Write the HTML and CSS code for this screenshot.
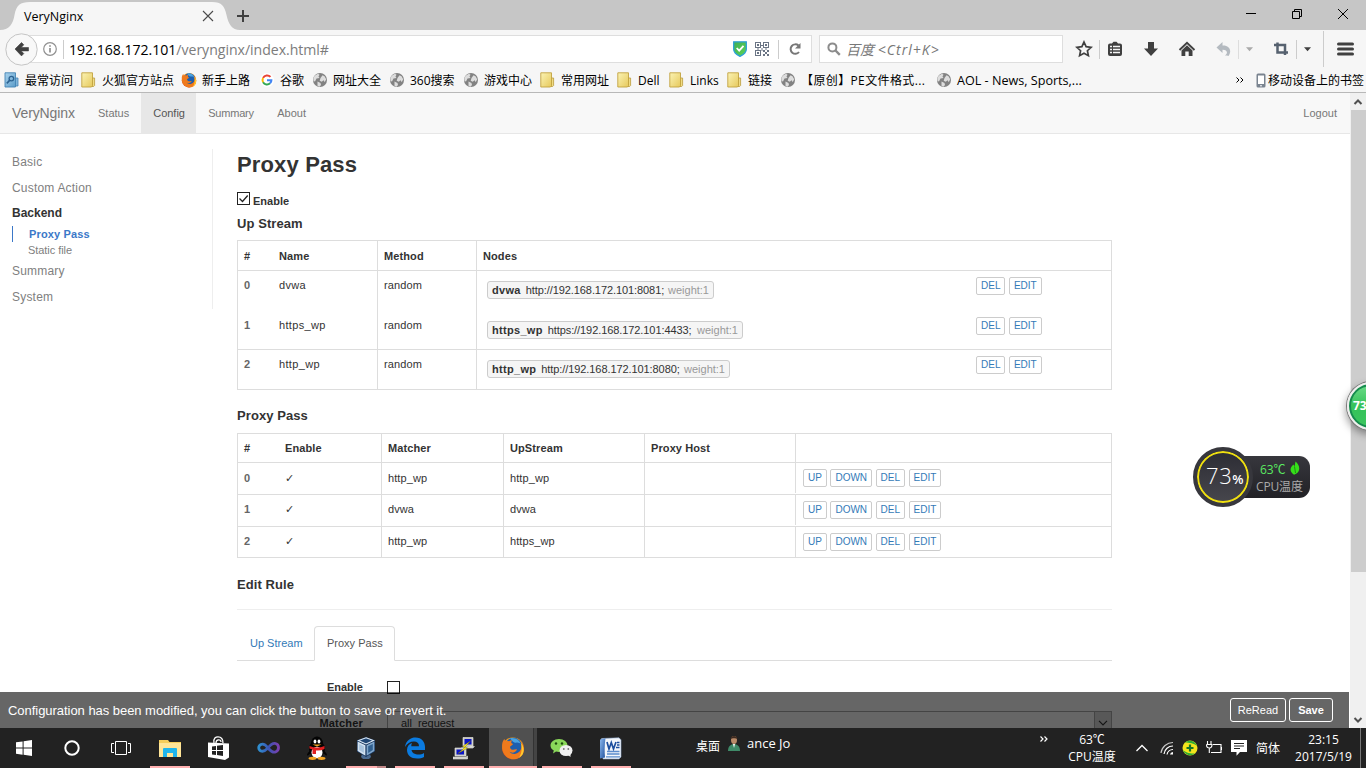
FILE: index.html
```html
<!DOCTYPE html>
<html lang="zh-CN">
<head>
<meta charset="utf-8">
<title>VeryNginx</title>
<link rel="stylesheet" href="styles.css">
</head>
<body>
<svg class="defs" width="0" height="0">
  <defs>
    <linearGradient id="gFold" x1="0" y1="0" x2="1" y2="1"><stop offset="0" stop-color="#fbf3b4"/><stop offset="1" stop-color="#e6c95c"/></linearGradient>
    <linearGradient id="gBlue" x1="0" y1="0" x2="1" y2="1"><stop offset="0" stop-color="#a9d3ee"/><stop offset="1" stop-color="#5b9cc9"/></linearGradient>
    <linearGradient id="gFox" x1="0" y1="0" x2="0" y2="1"><stop offset="0" stop-color="#f7a21b"/><stop offset="1" stop-color="#d93a1a"/></linearGradient>
    <linearGradient id="gVs" x1="0" y1="0" x2="1" y2="0"><stop offset="0" stop-color="#2f8fd0"/><stop offset=".5" stop-color="#3a55b4"/><stop offset="1" stop-color="#7a3fb0"/></linearGradient>
    <linearGradient id="gWord" x1="0" y1="0" x2="1" y2="1"><stop offset="0" stop-color="#8bb8ee"/><stop offset="1" stop-color="#1f4f9c"/></linearGradient>
    <linearGradient id="gShield" x1="0" y1="0" x2="1" y2="1"><stop offset="0" stop-color="#3fae55"/><stop offset="1" stop-color="#5ed455"/></linearGradient>
  </defs>
  <symbol id="folder" viewBox="0 0 16 16"><path d="M11 6h2.600v7.500l-1 1h-1.600z" fill="#f0dc84" stroke="#b99a3c" stroke-width=".8"/><path d="M.8.800h10.700v12.700L10.500 15H.8z" fill="url(#gFold)" stroke="#c2a33f" stroke-width=".9"/></symbol>
  <symbol id="often" viewBox="0 0 16 16"><path d="M11 6h3v8h-3z" fill="#7fb4da" stroke="#4484b4" stroke-width=".8"/><path d="M1 .8h10.5V15H1z" fill="url(#gBlue)" stroke="#4484b4" stroke-width=".9"/><circle cx="7.4" cy="6.6" r="2.3" fill="none" stroke="#2c6291" stroke-width="1.3"/><path d="M5.6 8.4 2.8 11.4" stroke="#2c6291" stroke-width="1.6"/></symbol>
  <symbol id="firefox" viewBox="0 0 24 24"><circle cx="12" cy="12.300" r="10.900" fill="url(#gFox)"/><circle cx="12.500" cy="10" r="8.300" fill="#1d5fae"/><path d="M9 2.200c5-1 9 1 11 6-1-1-3-2-5-1.500C13 7 11 5 9 2.200z" fill="#4aa3e0"/><path d="M1.200 8C1.500 5.500 2.500 4 3.500 3l.8 2.500C5.500 4.800 7 4.800 8 5.200L10.800 4l-.6 3c1 .4 1.800.8 1.600 1.600-.4 1-2 1.200-2.600 2-.3 1 .2 2.800 2.300 3.200 1.800.3 3-.9 4.500-.3-1 3-5 4-7.500 2.300 3 3.500 9 2.500 11-1.300 1.300-2.500 1.300-5 .5-7.500 2.500 3 3.500 6.500 2.300 10C20.500 21.500 16 23.500 12 23.300 5 23 .5 16 1.200 8z" fill="#ef7a1c"/><path d="M20 7c2.500 3 3.500 6.500 2 10.500-1 2-2.500 3.500-4 4.300 2.500-4 3.500-9 2-14.800z" fill="#ffcb2e"/></symbol>
  <symbol id="google" viewBox="0 0 16 16"><circle cx="8" cy="8" r="8" fill="#fff"/><g fill="none" stroke-width="2.300"><path d="M12 4.500A5.200 5.200 0 0 0 3.500 5.600" stroke="#ea4335"/><path d="M3.500 5.600a5.200 5.200 0 0 0 0 5" stroke="#fbbc05"/><path d="M3.500 10.500a5.200 5.200 0 0 0 8 1.300" stroke="#34a853"/><path d="M11.500 11.800A5 5 0 0 0 13 8.200H8" stroke="#4285f4"/></g></symbol>
  <symbol id="globe" viewBox="0 0 16 16"><circle cx="8" cy="8" r="7" fill="#828282"/><path d="M3 3.500l3-1.700 1.500 1-1 1.700 1 1.500-3 .5-1.500 3-1.500-.5C1 6.500 1.800 4.800 3 3.500zM8.500 6l2-2.800 2 1 1.700 3-1.500 3-1-2-2 1.500-2-1zM5.500 9.500l3 1.500.5 2-1.500 1.800-2-1z" fill="#ddd"/></symbol>
  <symbol id="tri" viewBox="0 0 8 5"><path d="M0 0h8L4 4.500z"/></symbol>
</svg>

<header class="titlebar">
  <div class="tab">
    <svg class="tab-shape" width="240" height="28" viewBox="0 0 240 28"><path d="M0 28C9 28 13 22 14.500 13 16.500 3 20 0 30 0H212C222 0 224.500 4 226.500 13 228.500 22 232 28 240 28z" fill="#f6f6f6"/></svg>
    <span class="tab-title">VeryNginx</span>
    <svg class="tab-close" width="12" height="12" viewBox="0 0 12 12"><path d="M1 1l10 10M11 1L1 11" stroke="#4a4a4a" stroke-width="1.100"/></svg>
  </div>
  <svg class="tab-new" width="14" height="14" viewBox="0 0 14 14"><path d="M7 1v12M1 7h12" stroke="#404040" stroke-width="2"/></svg>
  <div class="win-buttons">
    <svg width="12" height="12" viewBox="0 0 12 12"><path d="M1 5.500h10" stroke="#000"/></svg>
    <svg width="12" height="12" viewBox="0 0 12 12" fill="none" stroke="#000"><path d="M1.500 3.500h7v7h-7zM3.500 3.500v-2h7v7h-2"/></svg>
    <svg width="12" height="12" viewBox="0 0 12 12"><path d="M1 1l10 10M11 1L1 11" stroke="#000"/></svg>
  </div>
</header>

<div class="toolbar">
  <div class="urlbar">
    <svg class="back" width="33" height="33" viewBox="0 0 33 33"><circle cx="16.500" cy="16.500" r="15.700" fill="#f8f8f8" stroke="#c4c4c4"/><path d="M10 16l6.500-6.500 2.300 2.300-2.600 2.700H23.500v3.400h-7.300l2.600 2.700-2.300 2.300z" fill="#404040" stroke="#404040" stroke-width=".6"/></svg>
    <svg class="info" width="14" height="14" viewBox="0 0 14 14"><circle cx="7" cy="7" r="6.300" fill="none" stroke="#909090" stroke-width="1.200"/><path d="M7 6v4.500M7 3.200v1.600" stroke="#808080" stroke-width="1.500"/></svg>
    <i class="sep"></i>
    <span class="url"><b>192.168.172.101</b>/verynginx/index.html#</span>
    <svg class="shield" width="14" height="16" viewBox="0 0 14 16"><path d="M.7.800h12.600v7.500c0 3-3 5.500-6.300 7C3.700 13.800.7 11.300.7 8.300z" fill="url(#gShield)" stroke="#2b9fd8" stroke-width="1.300"/><path d="M3.700 7l2.500 2.700 4.300-4.900" fill="none" stroke="#fff" stroke-width="1.800"/></svg>
    <svg class="qr" width="14" height="14" viewBox="0 0 14 14" fill="#6a7484"><path fill-rule="evenodd" d="M0 0h6v6H0zM1 1v4h4V1zM8 0h6v6H8zM9 1v4h4V1zM0 8h6v6H0zM1 9v4h4V9z"/><path d="M2 2h2v2H2zM10 2h2v2h-2zM2 10h2v2H2zM8 8h2v2H8zM12 8h2v2h-2zM10 10h2v2h-2zM8 12h2v2H8zM12 12h2v2h-2zM6 3h2v1H6zM6.500 6h1v3h-1zM2 6.500h2v1H2zM10 6.500h2v1h-2z"/></svg>
    <i class="sep sep-reload"></i>
    <svg class="reload" width="14" height="14" viewBox="0 0 14 14"><path d="M10.500 3.600A4.700 4.700 0 1 0 11 10" fill="none" stroke="#777" stroke-width="2"/><path d="M12.500 1v5.500H7z" fill="#777"/></svg>
  </div>
  <div class="search">
    <svg width="14" height="14" viewBox="0 0 14 14"><circle cx="5.400" cy="5.400" r="4" fill="none" stroke="#8c8c8c" stroke-width="2"/><path d="M8.500 8.500l4.300 4.300" stroke="#8c8c8c" stroke-width="2.400"/></svg>
    <span>百度 <span class="keys">&lt;Ctrl+K&gt;</span></span>
  </div>
  <div class="tools">
    <svg width="18" height="18" viewBox="0 0 18 18"><path d="M9 2l2.100 4.700 5.100.6-3.800 3.400 1 5L9 13.200l-4.400 2.500 1-5L1.800 7.300l5.100-.6z" fill="none" stroke="#404040" stroke-width="1.700"/></svg>
    <i class="sep"></i>
    <svg width="16" height="16" viewBox="0 0 16 16"><path d="M4.500 3L6.500.800h3L11.500 3zM3 2.500h10a2 2 0 0 1 2 2V13a2 2 0 0 1-2 2H3a2 2 0 0 1-2-2V4.500a2 2 0 0 1 2-2z" fill="#404040"/><path d="M3 5.500h2M6 5.500h7M3 8.500h2M6 8.500h7M3 11.500h2M6 11.500h7" stroke="#f6f6f6" stroke-width="1.300"/></svg>
    <svg width="16" height="16" viewBox="0 0 16 16"><path d="M5 1h6v6.500h4L8 15 1 7.500h4z" fill="#404040"/></svg>
    <svg width="18" height="16" viewBox="0 0 18 16"><path d="M1.500 9L9 1.800 16.500 9" fill="none" stroke="#404040" stroke-width="1.900"/><path d="M3.500 9.500L9 4.300l5.500 5.200V15H10.700v-4.500H7.300V15H3.500z" fill="#404040"/></svg>
    <svg class="end" width="16" height="16" viewBox="0 0 16 16"><path d="M.5 6.500L6.500 1v3.500c6.500-.5 10 5 6 10.500-1-.5-2-.5-3.500-.5 3.500-2.500 2-6-2.500-5.800V12z" fill="#b4bac0"/></svg>
    <i class="sep pale"></i>
    <svg class="grey" width="7" height="5"><use href="#tri"/></svg>
    <svg class="end" width="16" height="16" viewBox="0 0 16 16"><path d="M1 4h11v10M4.500 1.500v10H15" fill="none" stroke="#56616f" stroke-width="2.500"/></svg>
    <i class="sep"></i>
    <svg class="dark" width="7" height="5"><use href="#tri"/></svg>
    <i class="sep tall"></i>
    <svg width="17" height="14" viewBox="0 0 17 14"><path d="M1.500 2h14M1.500 7h14M1.500 12h14" stroke="#404040" stroke-width="3" stroke-linecap="round"/></svg>
  </div>
</div>

<nav class="bookmarks">
  <a><svg width="16" height="16"><use href="#often"/></svg>最常访问</a>
  <a><svg width="16" height="16"><use href="#folder"/></svg>火狐官方站点</a>
  <a><svg width="16" height="16"><use href="#firefox"/></svg>新手上路</a>
  <a class="goog"><svg width="14" height="14"><use href="#google"/></svg>谷歌</a>
  <a><svg width="16" height="16"><use href="#globe"/></svg>网址大全</a>
  <a><svg width="16" height="16"><use href="#globe"/></svg>360搜索</a>
  <a><svg width="16" height="16"><use href="#globe"/></svg>游戏中心</a>
  <a><svg width="16" height="16"><use href="#folder"/></svg>常用网址</a>
  <a><svg width="16" height="16"><use href="#folder"/></svg>Dell</a>
  <a><svg width="16" height="16"><use href="#folder"/></svg>Links</a>
  <a><svg width="16" height="16"><use href="#folder"/></svg>链接</a>
  <a class="pe"><svg width="16" height="16"><use href="#globe"/></svg>【原创】PE文件格式...</a>
  <a class="aol"><svg width="16" height="16"><use href="#globe"/></svg>AOL - News, Sports,...</a>
  <span class="more"><svg width="8" height="6" viewBox="0 0 8 6"><path d="M.5.500L3 3 .5 5.500M4.500.500L7 3 4.500 5.500" fill="none" stroke="#000"/></svg></span>
  <a class="mobile"><svg width="10" height="15" viewBox="0 0 10 15"><rect x=".5" y=".5" width="9" height="14" rx="1.500" fill="#7a8490"/><path d="M2 2.500h6v8.500H2z" fill="#fff"/><path d="M4 12.800h2" stroke="#fff"/></svg>移动设备上的书签</a>
</nav>

<div class="viewport">
  <div class="page">
    <nav class="navbar">
      <a class="brand">VeryNginx</a><a>Status</a><a class="on">Config</a><a class="summ">Summary</a><a>About</a><a class="logout">Logout</a>
    </nav>
    <div class="body">
      <aside class="side">
        <a>Basic</a><a>Custom Action</a><a class="open">Backend</a>
        <div class="sub"><a class="cur">Proxy Pass</a><a>Static file</a></div>
        <a>Summary</a><a>System</a>
      </aside>
      <main class="main">
        <h1>Proxy Pass</h1>
        <label class="enable"><span class="box"><svg width="13" height="13" viewBox="0 0 13 13"><path d="M2.500 6.500l3 3 5.200-6" fill="none" stroke="#222" stroke-width="1.300"/></svg></span>Enable</label>
        <h2>Up Stream</h2>
        <div class="table up">
          <div class="row head"><b>#</b><b>Name</b><b class="l">Method</b><b class="l">Nodes</b><b></b></div>
          <div class="row merged"><i>0</i><span class="name">dvwa</span><span class="l">random</span><span class="l"><em class="w1"><b>dvwa</b><span>http://192.168.172.101:8081;</span><small>weight:1</small></em></span><span class="acts"><a>DEL</a><a>EDIT</a></span></div>
          <div class="row"><i>1</i><span class="name">https_wp</span><span class="l">random</span><span class="l"><em class="w2"><b>https_wp</b><span>https://192.168.172.101:4433;</span><small>weight:1</small></em></span><span class="acts"><a>DEL</a><a>EDIT</a></span></div>
          <div class="row last"><i>2</i><span class="name">http_wp</span><span class="l">random</span><span class="l"><em class="w3"><b>http_wp</b><span>http://192.168.172.101:8080;</span><small>weight:1</small></em></span><span class="acts"><a>DEL</a><a>EDIT</a></span></div>
        </div>
        <h2 class="h-pass">Proxy Pass</h2>
        <div class="table pass">
          <div class="row head"><b>#</b><b>Enable</b><b class="l">Matcher</b><b class="l">UpStream</b><b class="l">Proxy Host</b><b class="l"></b></div>
          <div class="row first"><i>0</i><span class="tick">✓</span><span class="l">http_wp</span><span class="l">http_wp</span><span class="l"></span><span class="l acts"><a>UP</a><a>DOWN</a><a>DEL</a><a>EDIT</a></span></div>
          <div class="row"><i>1</i><span class="tick">✓</span><span class="l">dvwa</span><span class="l">dvwa</span><span class="l"></span><span class="l acts"><a>UP</a><a>DOWN</a><a>DEL</a><a>EDIT</a></span></div>
          <div class="row last"><i>2</i><span class="tick">✓</span><span class="l">http_wp</span><span class="l">https_wp</span><span class="l"></span><span class="l acts"><a>UP</a><a>DOWN</a><a>DEL</a><a>EDIT</a></span></div>
        </div>
        <h2 class="h-edit">Edit Rule</h2>
        <div class="tabs"><a>Up Stream</a><a class="on">Proxy Pass</a></div>
        <div class="field"><b>Enable</b><span class="box"></span></div>
        <div class="field f-match"><b>Matcher</b><span class="select">all_request<i><svg width="10" height="6" viewBox="0 0 10 6"><path d="M1 .8l4 4 4-4" fill="none" stroke="#333" stroke-width="1.200"/></svg></i></span></div>
      </main>
    </div>
    <div class="notice"><span>Configuration has been modified, you can click the button to save or revert it.</span><button>ReRead</button><button class="save">Save</button></div>
  </div>
  <div class="scroll">
    <svg width="10" height="6" viewBox="0 0 10 6"><path d="M1.500 5L5 1.500 8.500 5" fill="none" stroke="#505050" stroke-width="2"/></svg>
    <div class="thumb"></div>
    <svg width="10" height="6" viewBox="0 0 10 6"><path d="M1.500 1L5 4.500 8.500 1" fill="none" stroke="#505050" stroke-width="2"/></svg>
  </div>
</div>

<div class="ball">73</div>
<div class="gadget">
  <div class="gadget-info"><span class="temp">63℃ <svg width="10" height="14" viewBox="0 0 10 14"><path d="M5.500.500C9.500 4 11 9 6.500 12.500L4 13.800C-.5 11 -.5 6.500 3.500 3.500l1 2z" fill="#35e01a"/><path d="M4.500 5.500L5.500 12" stroke="#1b7a10" stroke-width=".8"/></svg></span><span>CPU温度</span></div>
  <div class="dial"><span>73</span><small>%</small></div>
</div>

<footer class="taskbar">
  <div class="apps">
    <div><svg width="16" height="16" viewBox="0 0 16 16"><path d="M0 2.300L6.600 1.400V7.600H0zM7.600 1.200L16 0v7.600H7.600zM0 8.500h6.600v6.200L0 13.800zM7.600 8.500H16V16l-8.400-1.200z" fill="#fff"/></svg></div>
    <div><svg width="18" height="18" viewBox="0 0 18 18"><circle cx="9" cy="9" r="6.700" fill="none" stroke="#fff" stroke-width="2"/></svg></div>
    <div><svg width="20" height="14" viewBox="0 0 20 14"><path d="M4.500.500h11v13h-11zM3 2.500H.500v9H3M17 2.500h2.500v9H17" fill="none" stroke="#fff"/></svg></div>
    <div class="run"><svg width="22" height="19" viewBox="0 0 22 19"><path d="M0 1h9l1.500 2H22v15H0z" fill="#f5cd5b"/><path d="M0 4h22v14H0z" fill="#ffe597"/><path d="M4 18v-8q0-1 1-1h12q1 0 1 1v8h-4v-4H8v4z" fill="#1fb5ec"/></svg></div>
    <div><svg width="22" height="24" viewBox="0 0 22 24"><path d="M6 7C5 2 8 .8 10 .8s5 1.200 5 6.200M8 7C8 3 13 3 13 6" fill="none" stroke="#fff" stroke-width="1.300"/><path d="M0 6.500L21 7.500v14L17 24 0 21z" fill="#fff"/><path d="M4 10.500l4-.6v4H4zM9 9.800l6-.7v4.800H9zM4 15h4v4l-4-.6zM9 15h6v4.900l-6-.8z" fill="#222"/></svg></div>
    <div><svg width="24" height="14" viewBox="0 0 24 14"><path d="M12 7C9 3 7 2.500 5 3.500 2 5 2 8.500 5 10c3 1.200 5-1 7-3 3-4 5-5 7.500-4.500 4 1 4 7 0 8.500-3 1-5-1-7.500-4z" fill="none" stroke="url(#gVs)" stroke-width="2.800"/></svg></div>
    <div><svg width="22" height="24" viewBox="0 0 22 24"><path d="M4 15C0 18 1 20 2 19.500L5 17M18 15c4 3 3 5 2 4.500L17 17" fill="#050505"/><ellipse cx="11" cy="13" rx="8" ry="9" fill="#050505"/><ellipse cx="11" cy="7.500" rx="6" ry="7" fill="#050505"/><ellipse cx="11" cy="16.500" rx="5.500" ry="5.800" fill="#fff"/><ellipse cx="9" cy="5.500" rx="1.400" ry="1.900" fill="#fff"/><ellipse cx="13" cy="5.500" rx="1.400" ry="1.900" fill="#fff"/><path d="M6.500 8.500h9L11 10.500z" fill="#f5a623"/><path d="M3.500 10q7.500 3 15 0v3q-4 2-8.500 1.500V18H6.500v-4.500l-3-1z" fill="#e02020"/><ellipse cx="6.500" cy="22.300" rx="4" ry="1.600" fill="#f5a623"/><ellipse cx="15.500" cy="22.300" rx="4" ry="1.600" fill="#f5a623"/></svg></div>
    <div class="run multi"><svg width="20" height="24" viewBox="0 0 20 24"><path d="M6 18h8l1 3-2 2H7l-2-2z" fill="#4a6a90"/><path d="M10 1L19 4.300v11.200L10 21 1 15.500V4.300z" fill="#16345c"/><path d="M10 1.800L17.500 4.600 10 8 2.500 4.600z" fill="#1f4674" stroke="#dbe8f5" stroke-width="1.100"/><path d="M1.600 5.500L9.400 9.200v10.600L1.600 15z" fill="#d3e2f0"/><path d="M18.400 5.500L10.600 9.200v10.600L18.400 15z" fill="#7fa6cb"/><path d="M3.200 8l4.700 2.300v6.600L3.200 14z" fill="#a9c4de"/><path d="M12.200 10.300L16.800 8v6l-4.600 2.900z" fill="#31608f"/></svg></div>
    <div class="run"><svg width="22" height="22" viewBox="0 0 22 22"><path d="M1 10C2 3 7 .5 11.500.500 18 .5 21 5.500 21 10v3H7.500c.5 3 3.500 4.500 7 4.500 2 0 4-.5 5.500-1.500v4c-2 1-4 1.500-7 1.500-6 0-10-3.500-10-8.500C3 9.500 5 7 8 6 7.500 7 7.300 8 7.300 9.200H15C15 6 13 4.500 10 4.500 6 4.500 3 6.500 1 10z" fill="#0b7be0"/></svg></div>
    <div class="run"><svg width="22" height="23" viewBox="0 0 22 23"><path d="M10 .5h10v9H10zM8 11h12l1.500-2" fill="#c8c8c0" stroke="#eee" stroke-width=".6"/><path d="M11.500 2h7v5.500h-7z" fill="#0a14c8"/><path d="M2 11h11v8H2zM0 20h13l1.500-1v3H0z" fill="#c8c8c0" stroke="#eee" stroke-width=".6"/><path d="M3.500 12.500h7.500v5H3.500z" fill="#0a14c8"/><path d="M17.500 4l-8 5.500 2.500.8-7 6.200 9.500-5.500-2.500-1z" fill="#ffee20" stroke="#6b6400" stroke-width=".4"/></svg></div>
    <div class="run active"><svg width="24" height="24"><use href="#firefox"/></svg></div>
    <div class="run"><svg width="23" height="20" viewBox="0 0 23 20"><path d="M9 1c5 0 8.500 3 8.500 6.500S14 14 9 14c-1 0-2-.1-3-.4L3 15.500l.8-2.900C1.800 11.500.5 9.500.5 7.500.5 4 4 1 9 1z" fill="#8ad85a"/><circle cx="6" cy="5.500" r="1.200" fill="#1d4d0e"/><circle cx="12" cy="5.500" r="1.200" fill="#1d4d0e"/><ellipse cx="16" cy="12.500" rx="6.500" ry="5.500" fill="#f0f0f0"/><path d="M18 17l2.500 2v-4z" fill="#f0f0f0"/><circle cx="13.800" cy="11" r=".9" fill="#777"/><circle cx="18.300" cy="11" r=".9" fill="#777"/></svg></div>
    <div class="run"><svg width="23" height="23" viewBox="0 0 23 23"><path d="M2.500 1.500L20 .8l2 2V20l-2 2H4z" fill="#f3f6fb" stroke="#8ea9cf" stroke-width=".6"/><path d="M1 2.500L6.500 1.300C5.500 8 5.500 15 6 20.500L1 21.500z" fill="url(#gWord)"/><path d="M8 5l2 7 2.300-6.500L14.500 12 17 5M18 5.500h2.500M18 8h2.500M17 10.500h3.500" fill="none" stroke="#1d4e9e" stroke-width="1.700"/><path d="M8 14.500h12.500M8 17h12.500M7 19.800h14" stroke="#5b8ccd" stroke-width="1.300"/></svg></div>
  </div>
  <div class="desk"><span>桌面</span><svg width="14" height="17" viewBox="0 0 14 17"><path d="M1 16c0-5 3-7 6-7s6 2 6 7z" fill="#3f8a68"/><ellipse cx="7" cy="5" rx="3" ry="4" fill="#b98a68"/><path d="M3.500 4C3.500 0 10.500 0 10.500 4 9 3 5 3 3.500 4z" fill="#3c2a20"/><path d="M6 9h2l-1 4z" fill="#fff"/></svg><span class="who">ance Jo</span></div>
  <div class="tray">
    <svg class="up-a" width="8" height="6" viewBox="0 0 8 6"><path d="M.5.500L3 3 .5 5.500M4.500.500L7 3 4.500 5.500" fill="none" stroke="#fff" stroke-width="1.200"/></svg>
    <div class="stack">63℃<br>CPU温度</div>
    <svg width="14" height="8" viewBox="0 0 14 8"><path d="M1.500 7L7 1.500 12.500 7" fill="none" stroke="#fff" stroke-width="1.300"/></svg>
    <svg width="14" height="14" viewBox="0 0 14 14"><g fill="none" stroke="#fff" stroke-width="1.200"><path d="M1 12A12 12 0 0 1 13 1.500" opacity=".75"/><path d="M4 13A9 9 0 0 1 13 5"/><path d="M7 13.500A6 6 0 0 1 13 8.500"/></g><path d="M10 13.500a3 3 0 0 1 3-2.500v2.500z" fill="#fff"/></svg>
    <svg width="16" height="16" viewBox="0 0 16 16"><circle cx="8" cy="8" r="7.500" fill="#f4e41c"/><path d="M3 2.500A7.500 7.500 0 0 1 15 6C12 3 7 3 3 2.500zM13 13.500A7.500 7.500 0 0 1 1 10c3 3 8 3.500 12 3.500z" fill="#2fae35"/><path d="M8 4.500v7M4.500 8h7" stroke="#14752a" stroke-width="2.200"/></svg>
    <svg width="16" height="14" viewBox="0 0 16 14"><path d="M7 3.500h8v8H5M15.500 6v3" fill="none" stroke="#fff" stroke-width="1.100"/><path d="M1.500 0v3M5 0v3M.5 3.500H6C6 7 4.500 7 3.300 7 2 7 .5 6.500.5 3.500M3.300 7v5" fill="none" stroke="#fff" stroke-width="1.100"/></svg>
    <svg width="16" height="16" viewBox="0 0 16 16"><path d="M0 0h16v12H9l-3.500 3.800V12H0z" fill="#fff"/><path d="M3 3.500h10M3 6h10M3 8.500h6" stroke="#222"/></svg>
    <span class="ime">简体</span>
    <div class="stack">23:15<br>2017/5/19</div>
    <i class="peek"></i>
  </div>
</footer>
</body>
</html>
```
FILE: styles.css
```css
* { box-sizing: border-box; }
body {
  margin: 0; width: 1366px; height: 768px; overflow: hidden; position: relative;
  display: flex; flex-direction: column; background: #fff;
  font: 12px "Open Sans", "Noto Sans CJK SC", sans-serif; color: #000;
}
svg { display: block; flex: none; }
.defs { position: absolute; }
i, em { font-style: normal; }

/* window title bar */
.titlebar { height: 30px; flex: none; background: #c6c6c6; display: flex; }
.tab { position: relative; width: 236px; height: 30px; display: flex; align-items: center; padding: 2px 0 0 24px; }
.tab-shape { position: absolute; left: 0; top: 2px; }
.tab-title { position: relative; width: 178px; font-size: 12.500px; }
.tab-close { position: relative; }
.tab-new { margin-top: 9px; }
.win-buttons { margin: 8px 17px 0 auto; display: flex; gap: 34px; }

/* address row */
.toolbar { height: 38px; flex: none; background: #f6f6f6; display: flex; align-items: center; padding-left: 5px; }
.urlbar { width: 808px; height: 33px; display: flex; align-items: center; padding-right: 1px;
  background: linear-gradient(#fff, #fff) 16px 3px / 790px 26px no-repeat, linear-gradient(#dedede, #dedede) 16px 2px / 791px 28px no-repeat; }
.info { margin: 0 6px 0 5px; }
.sep { width: 1px; height: 19px; background: #ccc; }
.url { width: 664px; margin-left: 5px; font-size: 14.100px; color: #7c7c7c; white-space: nowrap; letter-spacing: -.03px; }
.url b { font-weight: 400; color: #000; }
.qr { margin-left: 8px; }
.sep-reload { margin: 0 9px; }
.search { width: 244px; height: 28px; margin: -1px 0 0 6px; border: 1px solid #dedede; background: #fff;
  display: flex; align-items: center; padding-left: 7px; gap: 5px; font-size: 14px; font-style: italic; color: #777; }
.keys { letter-spacing: 1.050px; }
.tools { display: grid; align-items: center; justify-items: center; height: 38px; margin-left: 10px;
  grid-template-columns: 22px 8px 24px 48px 24px 33px 12px 10px 35px 14px 8px 24px 20px; }
.tools .end { justify-self: end; }
.pale { background: #ddd; }
.tall { height: 36px; }
.grey { fill: #aaa; }
.dark { fill: #404040; }

/* bookmarks row */
.bookmarks { height: 25px; flex: none; background: #f6f6f6; border-bottom: 1px solid #b8b8b8; padding-left: 4px;
  display: grid; align-items: center; white-space: nowrap;
  grid-template-columns: 77px 100px 79px 52px 77px 74px 77px 77px 52px 58px 53px 156px 300px 20px 114px; }
.bookmarks a { display: flex; align-items: center; gap: 5px; height: 24px; }
.bookmarks .goog { gap: 6px; }
.bookmarks .pe { letter-spacing: .38px; }
.bookmarks .aol { font-size: 12.600px; gap: 5px; }
.bookmarks .mobile { gap: 2px; }

/* page area */
.viewport { height: 635px; flex: none; display: flex; }
.page { position: relative; width: 1350px; overflow: hidden; font: 11px "Liberation Sans", Arial, sans-serif; color: #333; }
.navbar { height: 41px; background: #f8f8f8; border-bottom: 1px solid #e7e7e7; display: flex; line-height: 40px; color: #777; }
.navbar a { padding: 0 12px; }
.navbar .brand { font-size: 14px; width: 86px; letter-spacing: -.1px; }
.navbar .on { background: #e7e7e7; color: #555; width: 55px; }
.navbar .summ { letter-spacing: -.2px; width: 69px; }
.navbar .logout { margin-left: auto; padding-right: 13px; }
.body { display: flex; padding-top: 15px; }
.side { width: 213px; height: 160px; border-right: 1px solid #eee; padding: 0 0 0 12px; display: flex; flex-direction: column;
  font-size: 12px; letter-spacing: .2px; color: #808080; line-height: 26px; }
.side .open { font-weight: 700; color: #333; line-height: 25px; letter-spacing: 0; }
.sub { font-size: 11px; line-height: 16px; height: 32px; display: flex; flex-direction: column; letter-spacing: -.05px; }
.sub a { padding-left: 16px; }
.sub .cur { font-weight: 700; color: #3b78c8; border-left: 1px solid #3b78c8; letter-spacing: .15px; }
.main { width: 875px; margin-left: 24px; }
h1 { margin: 0; font-size: 22px; line-height: 32px; letter-spacing: .15px; }
.enable { display: flex; align-items: center; gap: 3px; margin-top: 11px; height: 16px; font-weight: 700; padding-top: 2px; }
.enable .box { margin-top: -5px; }
.box { width: 13px; height: 13px; border: 1px solid #222; background: #fff; }
.box svg { margin: -1px; }
h2 { margin: 6px 0 0; font-size: 13px; line-height: 20px; letter-spacing: .08px; }
.table { border: 1px solid #ddd; font-size: 11px; letter-spacing: .1px; }
.row { display: grid; border-bottom: 1px solid #ddd; }
.row > * { padding: 0 6px; }
.row .l { border-left: 1px solid #ddd; }
.row i { font-weight: 700; color: #666; }
.row .name { letter-spacing: .35px; }
.up { margin-top: 6px; }
.up .row { grid-template-columns: 35px 104px 99px 492px 1fr; height: 39px; line-height: 28px; }
.up .head { height: 30px; line-height: 30px; }
.up .merged { height: 40px; border-bottom: 0; }
.up .row.last { border-bottom: 0; }
em { display: flex; align-items: center; height: 18px; margin: 10px 0 0 4px; padding: 0 4px; border: 1px solid #ccc;
  border-radius: 3px; background: #f5f5f5; line-height: 16px; letter-spacing: -.08px; white-space: nowrap; }
em b { letter-spacing: .3px; }
em small { font-size: 11px; color: #999; margin-left: auto; letter-spacing: 0; }
em span { margin-left: 5px; }
.w1 { width: 227px; } .w2 { width: 256px; } .w3 { width: 243px; }
.acts { display: flex; align-items: center; gap: 3.500px; }
.up .acts { height: 30px; padding-left: 8px; }
.acts a { border: 1px solid #ccc; border-radius: 2px; height: 18px; padding: 0 4px; font-size: 10px; line-height: 15px; color: #337ab7; letter-spacing: 0; }
.h-pass { margin-top: 16px; }
.pass { margin-top: 7px; }
.pass .row { grid-template-columns: 41px 102px 122px 141px 151px 1fr; height: 32px; line-height: 29px; }
.pass .first { line-height: 31px; }
.pass .head { height: 29px; line-height: 29px; }
.pass .row.last { height: 30px; border-bottom: 0; }
.pass .acts { padding-left: 7px; height: 30px; }
.tick { font-family: "DejaVu Sans", sans-serif; }
.h-edit { margin-top: 17px; padding-bottom: 14px; border-bottom: 1px solid #eee; }
.tabs { display: flex; margin-top: 16px; height: 35px; border-bottom: 1px solid #ddd; line-height: 33px; }
.tabs a { height: 35px; padding: 0 12px; border: 1px solid transparent; color: #337ab7; width: 77px; white-space: nowrap; }
.tabs .on { width: 81px; border-color: #ddd #ddd #fff; border-radius: 4px 4px 0 0; background: #fff; color: #555; }
.field { display: grid; grid-template-columns: 126px 1fr; column-gap: 24px; align-items: center; height: 16px; margin-top: 18px; }
.field b { text-align: right; }
.f-match { height: 24px; margin-top: 16px; }
.f-match b { letter-spacing: .2px; }
.select { height: 24px; border: 1px solid #aaa; padding-left: 13px; line-height: 22px; display: flex; justify-content: space-between; letter-spacing: -.05px; }
.select i { width: 17px; background: #ddd; border-left: 1px solid #aaa; display: flex; align-items: center; justify-content: center; }
.notice { position: absolute; left: 0; top: 599px; width: 1349px; height: 36px; background: rgba(0, 0, 0, .6); color: #fff;
  display: flex; align-items: center; padding: 0 16px 0 8px; font-size: 13px; letter-spacing: -.04px; }
.notice span { margin-right: auto; }
.notice button { width: 56px; height: 24px; border: 1px solid #fff; border-radius: 3px; background: transparent; color: #fff; padding: 0;
  font: 11px "Liberation Sans", Arial, sans-serif; }
.notice .save { width: 44px; margin-left: 3px; font-weight: 700; }
.scroll { width: 16px; background: #f0f0f0; display: flex; flex-direction: column; align-items: center; padding: 6px 0 5px; }
.thumb { width: 15px; height: 462px; margin: 5px 0 auto; background: #cdcdcd; }

/* floating monitor widgets */
.ball { position: absolute; left: 1347px; top: 382px; width: 48px; height: 48px; border-radius: 50%; border: 2px solid #eee;
  background: linear-gradient(#6fdc8a, #35c25a 50%, #3cc55e); color: #fff; font-weight: 700; font-size: 12px; line-height: 43px; padding-left: 4px;
  box-shadow: 0 0 0 1px #777, inset 0 0 0 2px #178a50, -1px 4px 8px rgba(0,0,0,.4); }
.gadget { position: absolute; left: 1193px; top: 447px; width: 117px; height: 60px; color: #aaa; }
.gadget-info { position: absolute; left: 30px; top: 9px; width: 87px; height: 42px; border-radius: 11px; background: linear-gradient(#37373d, #222226);
  padding: 5px 0 0 33px; line-height: 17px; display: flex; flex-direction: column; white-space: nowrap; letter-spacing: -.15px; }
.temp { display: flex; gap: 5px; padding-left: 4px; color: #5bea62; }
.dial { position: absolute; left: 0; top: 0; width: 60px; height: 60px; border-radius: 50%; background: linear-gradient(#2c2c34, #47474d);
  border: 4px solid #37373d; box-shadow: inset 0 0 0 2px #f0e010; color: #fff; display: flex; align-items: baseline; padding: 9px 0 0 9px; line-height: 30px; }
.dial span { font-size: 22px; font-weight: 300; letter-spacing: .6px; }
.dial small { font-size: 13px; font-weight: 600; }

/* system taskbar */
.taskbar { height: 40px; flex: none; background: #222; color: #fff; display: flex; position: relative; }
.apps { display: grid; grid-template-columns: 48px 48px 49px repeat(10, 49px); width: 640px; }
.apps div { display: flex; align-items: center; justify-content: center; height: 40px; }
.apps .run { background: linear-gradient(#ffafaf, #ffafaf) 5px 38px / 40px 2px no-repeat; }
.apps .multi { background: linear-gradient(90deg, #ffafaf 31px, #c18888 31px) 5px 38px / 40px 2px no-repeat; }
.apps .active { background: linear-gradient(#ffafaf, #ffafaf) 1px 38px / 48px 2px no-repeat, linear-gradient(90deg, #222 1px, #505050 1px, #505050 45px, #333 45px, #333 46px, #444 46px); }
.desk { display: flex; padding-left: 56px; width: 395px; }
.desk span { line-height: 38px; }
.desk svg { margin: 7px 6px 0 7px; }
.desk .who { line-height: 31px; font-size: 13px; }
.tray { display: grid; width: 331px; align-items: center; justify-items: center;
  grid-template-columns: 18px 78px 22px 28px 18px 30px 19px 42px 67px 9px; }
.up-a { align-self: start; margin-top: 8px; }
.stack { text-align: center; line-height: 17px; white-space: nowrap; }
.ime { padding-right: 2px; }
.peek { width: 1px; height: 40px; background: #777; justify-self: start; margin-left: 3px; }
```
